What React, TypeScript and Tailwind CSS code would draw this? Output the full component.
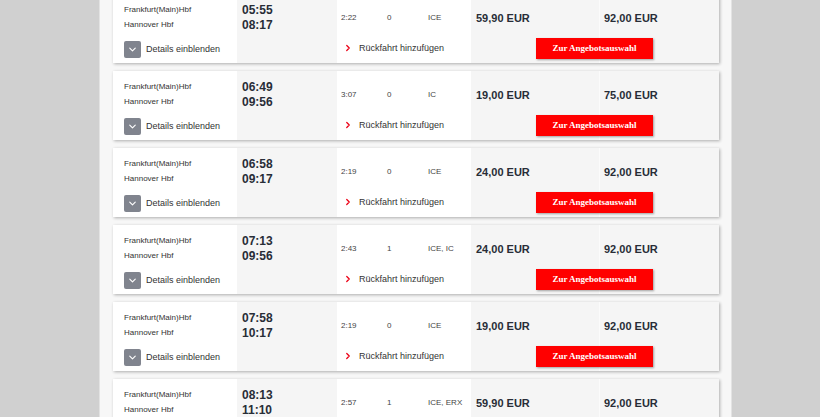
import { ChevronDown, ChevronRight } from "lucide-react";

type Trip = {
  dep: string;
  arr: string;
  duration: string;
  changes: string;
  products: string;
  price: string;
  flexPrice: string;
};

const trips: Trip[] = [
  { dep: "05:55", arr: "08:17", duration: "2:22", changes: "0", products: "ICE", price: "59,90 EUR", flexPrice: "92,00 EUR" },
  { dep: "06:49", arr: "09:56", duration: "3:07", changes: "0", products: "IC", price: "19,00 EUR", flexPrice: "75,00 EUR" },
  { dep: "06:58", arr: "09:17", duration: "2:19", changes: "0", products: "ICE", price: "24,00 EUR", flexPrice: "92,00 EUR" },
  { dep: "07:13", arr: "09:56", duration: "2:43", changes: "1", products: "ICE, IC", price: "24,00 EUR", flexPrice: "92,00 EUR" },
  { dep: "07:58", arr: "10:17", duration: "2:19", changes: "0", products: "ICE", price: "19,00 EUR", flexPrice: "92,00 EUR" },
  { dep: "08:13", arr: "11:10", duration: "2:57", changes: "1", products: "ICE, ERX", price: "59,90 EUR", flexPrice: "92,00 EUR" },
];

function TripCard({ trip }: { trip: Trip }) {
  return (
    <div className="grid h-[69px] w-[606px] shrink-0 grid-cols-[124px_100px_134px_128px_120px] grid-rows-[40px_29px] bg-white shadow-[1px_1px_3px_rgba(0,0,0,0.3)]">
      {/* column backgrounds */}
      <div className="col-start-2 row-span-2 row-start-1 bg-[#f5f5f5]" />
      <div className="col-start-4 row-span-2 row-start-1 bg-[#f5f5f5]" />
      <div className="col-start-5 row-span-2 row-start-1 border-l border-[#fbfbfb] bg-[#f5f5f5]" />

      {/* stations */}
      <div className="col-start-1 row-start-1 pl-[11px] pt-[8px] text-[8px] leading-[15px] text-[#333]">
        <div>Frankfurt(Main)Hbf</div>
        <div>Hannover Hbf</div>
      </div>

      {/* times */}
      <div className="col-start-2 row-start-1 pl-[5px] pt-[9px] text-[12px] font-bold leading-[15px] text-[#282d37]">
        <div>{trip.dep}</div>
        <div>{trip.arr}</div>
      </div>

      {/* duration / changes / products */}
      <div className="col-start-3 row-start-1 flex pl-[4px] pt-[19px] text-[8px] leading-[10px] text-[#444]">
        <span className="w-[46px]">{trip.duration}</span>
        <span className="w-[41px]">{trip.changes}</span>
        <span>{trip.products}</span>
      </div>

      {/* prices */}
      <div className="col-start-4 row-start-1 pl-[5px] pt-[17px] text-[11px] font-bold leading-[14px] text-[#282d37]">
        {trip.price}
      </div>
      <div className="col-start-5 row-start-1 pl-[5px] pt-[17px] text-[11px] font-bold leading-[14px] text-[#282d37]">
        {trip.flexPrice}
      </div>

      {/* bottom row */}
      <div className="col-start-1 row-start-2 flex items-start pl-[11px] pt-[7px]">
        <span className="flex h-[17px] w-[17px] items-center justify-center rounded-[2px] bg-[#80848e]">
          <ChevronDown size={11} strokeWidth={2.5} className="text-white" />
        </span>
        <span className="ml-[5px] text-[9px] leading-[17px] text-[#333]">Details einblenden</span>
      </div>

      <div className="col-start-3 row-start-2 flex items-center pb-[1px] pl-[6px]">
        <ChevronRight size={10} strokeWidth={3} className="text-[#ec0016]" />
        <span className="ml-[6px] text-[9px] leading-[12px] text-[#333]">Rückfahrt hinzufügen</span>
      </div>

      <div className="col-span-2 col-start-4 row-start-2 pl-[65px] pt-[4px]">
        <button className="flex h-[21px] w-[117px] items-center justify-center bg-[#ff0000] text-[9px] font-bold text-white shadow-[1px_1px_2px_rgba(0,0,0,0.35)] [font-family:'Liberation_Serif',serif]">
          Zur Angebotsauswahl
        </button>
      </div>
    </div>
  );
}

export default function App() {
  return (
    <div className="flex h-[417px] w-[820px] overflow-hidden bg-[#d0d0d0] [font-family:'Liberation_Sans',Arial,sans-serif]">
      <div className="ml-[99px] h-full w-[633px] border-x border-[#e3e3e3] bg-[#f7f7f7] pl-[13px]">
        <div className="-mt-[6px] flex flex-col gap-[8px]">
          {trips.map((t, i) => (
            <TripCard key={i} trip={t} />
          ))}
        </div>
      </div>
    </div>
  );
}
